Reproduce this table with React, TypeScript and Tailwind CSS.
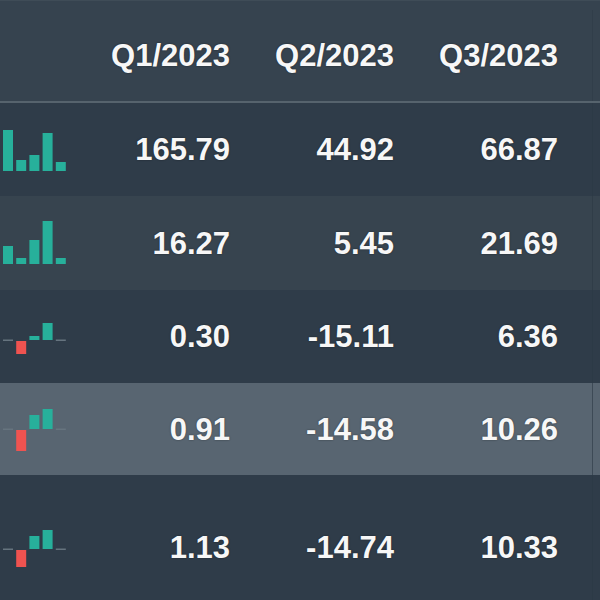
import React from "react";

type Bar = { x: number; y1: number; y2: number; c: "g" | "r" | "l" };

const G = "#27b09b";
const R = "#ef5350";
const L = "#66747f";

function Spark({ bars, h }: { bars: Bar[]; h: number }) {
  return (
    <svg width={70} height={h} className="block">
      {bars.map((b, i) =>
        b.c === "l" ? (
          <rect key={i} x={b.x} y={b.y1} width={10} height={1.5} fill={L} />
        ) : (
          <rect key={i} x={b.x} y={b.y1} width={10} height={b.y2 - b.y1} fill={b.c === "g" ? G : R} />
        )
      )}
    </svg>
  );
}

const xs = [3, 16.2, 29.4, 42.6, 55.8];

const rows: { vals: string[]; bars: Bar[]; h: number; bg: string }[] = [
  {
    vals: ["165.79", "44.92", "66.87"],
    h: 93,
    bg: "bg-[#2f3c49]",
    bars: [
      { x: xs[0], y1: 27, y2: 68, c: "g" },
      { x: xs[1], y1: 57, y2: 68, c: "g" },
      { x: xs[2], y1: 52, y2: 68, c: "g" },
      { x: xs[3], y1: 30, y2: 68, c: "g" },
      { x: xs[4], y1: 59, y2: 68, c: "g" },
    ],
  },
  {
    vals: ["16.27", "5.45", "21.69"],
    h: 94,
    bg: "bg-[#37444f]",
    bars: [
      { x: xs[0], y1: 50, y2: 68, c: "g" },
      { x: xs[1], y1: 62, y2: 68, c: "g" },
      { x: xs[2], y1: 44, y2: 68, c: "g" },
      { x: xs[3], y1: 25, y2: 68, c: "g" },
      { x: xs[4], y1: 62, y2: 68, c: "g" },
    ],
  },
  {
    vals: ["0.30", "-15.11", "6.36"],
    h: 93,
    bg: "bg-[#2f3c49]",
    bars: [
      { x: xs[0], y1: 49.5, y2: 51, c: "l" },
      { x: xs[1], y1: 51, y2: 64, c: "r" },
      { x: xs[2], y1: 46, y2: 50, c: "g" },
      { x: xs[3], y1: 33, y2: 50, c: "g" },
      { x: xs[4], y1: 49.5, y2: 51, c: "l" },
    ],
  },
  {
    vals: ["0.91", "-14.58", "10.26"],
    h: 92,
    bg: "bg-[#586571]",
    bars: [
      { x: xs[0], y1: 45.5, y2: 47, c: "l" },
      { x: xs[1], y1: 47, y2: 68, c: "r" },
      { x: xs[2], y1: 32, y2: 46, c: "g" },
      { x: xs[3], y1: 26, y2: 46, c: "g" },
      { x: xs[4], y1: 45.5, y2: 47, c: "l" },
    ],
  },
  {
    vals: ["1.13", "-14.74", "10.33"],
    h: 144,
    bg: "bg-[#2f3c49]",
    bars: [
      { x: xs[0], y1: 73.5, y2: 75, c: "l" },
      { x: xs[1], y1: 75, y2: 92, c: "r" },
      { x: xs[2], y1: 61, y2: 74, c: "g" },
      { x: xs[3], y1: 55, y2: 74, c: "g" },
      { x: xs[4], y1: 73.5, y2: 75, c: "l" },
    ],
  },
];

const txt =
  "font-['Liberation_Sans',Arial,sans-serif] font-bold text-[31px] leading-none text-[#f7f7f7] [text-shadow:0_0_2px_rgba(0,0,0,0.45)]";

export default function App() {
  return (
    <div className="w-[600px] h-[600px] overflow-hidden bg-[#34414d]">
      <div className="w-[600px] flex flex-col">
        <div className="flex h-[101px] bg-[#36434f] border-t border-[#3f4c57] pt-[9px] items-center">
          <div className="w-[100px]" />
          {["Q1/2023", "Q2/2023", "Q3/2023"].map((q) => (
            <div key={q} className={`w-[164px] pr-[34px] text-right ${txt}`}>
              {q}
            </div>
          ))}
          <div className="flex-1 self-stretch border-l border-[#313e4a]" />
        </div>
        <div className="h-[2px] bg-[#56636d]" />
        {rows.map((r, i) => (
          <div key={i} className={`flex items-stretch ${r.bg}`} style={{ height: r.h }}>
            <div className="w-[100px]">
              <Spark bars={r.bars} h={r.h} />
            </div>
            {r.vals.map((v, j) => (
              <div key={j} className={`w-[164px] pr-[34px] flex items-center justify-end ${txt}`}>
                {v}
              </div>
            ))}
            <div className="flex-1 border-l border-[#2c3945]/60" />
          </div>
        ))}
      </div>
    </div>
  );
}
